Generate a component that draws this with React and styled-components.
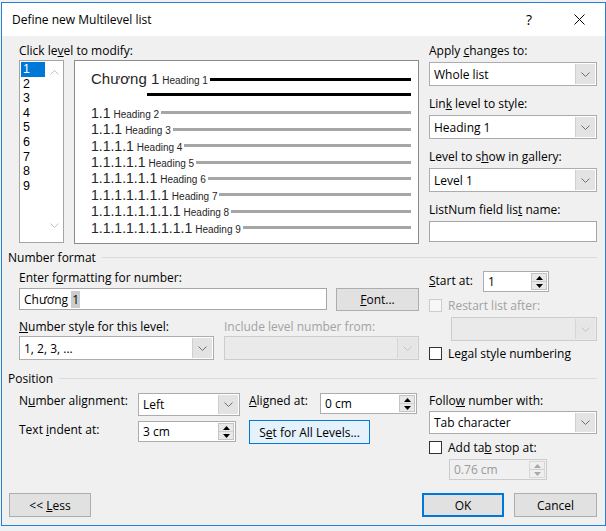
import styled, { createGlobalStyle } from "styled-components";

const GlobalStyle = createGlobalStyle`
  html, body {
    margin: 0;
    padding: 0;
  }
  body {
    background: #eef1f4;
    font-family: "Open Sans", "Noto Sans", sans-serif;
    font-size: 12px;
    color: #000;
  }
`;

const levels = [1, 2, 3, 4, 5, 6, 7, 8, 9];

const Chevron = ({ color = "#606060" }) => (
  <svg width="9" height="5" viewBox="0 0 9 5">
    <polyline points="0.5,0.5 4.5,4.5 8.5,0.5" fill="none" stroke={color} strokeWidth="1" />
  </svg>
);

const SpinArrows = ({ disabled }) => {
  const c = disabled ? "#a8a8a8" : "#000";
  return (
    <SpinBox $disabled={disabled}>
      <SpinHalf>
        <svg width="7" height="4" viewBox="0 0 7 4"><polygon points="0,4 3.5,0 7,4" fill={c} /></svg>
      </SpinHalf>
      <SpinHalf $bottom>
        <svg width="7" height="4" viewBox="0 0 7 4"><polygon points="0,0 3.5,4 7,0" fill={c} /></svg>
      </SpinHalf>
    </SpinBox>
  );
};

const Combo = ({ value, width, height, disabled }) => (
  <Select $w={width} $h={height} $disabled={disabled}>
    <SelectValue>{value}</SelectValue>
    <DropButton $disabled={disabled}>
      <Chevron color={disabled ? "#c4c4c4" : "#707070"} />
    </DropButton>
  </Select>
);

const Spinner = ({ value, width, disabled }) => (
  <SpinField $w={width} $disabled={disabled}>
    <SelectValue>{value}</SelectValue>
    <SpinArrows disabled={disabled} />
  </SpinField>
);

const App = () => {
  return (
    <>
      <GlobalStyle />
      <Dialog>
        <TitleBar>
          <Title>Define new Multilevel list</Title>
          <CaptionButton>?</CaptionButton>
          <CaptionButton>
            <svg width="11" height="11" viewBox="0 0 11 11">
              <path d="M0.5 0.5 L10.5 10.5 M10.5 0.5 L0.5 10.5" stroke="#000" strokeWidth="1" />
            </svg>
          </CaptionButton>
        </TitleBar>

        <Body>
          <Columns>
            <div>
              <Label>Click le<Key>v</Key>el to modify:</Label>
              <LevelRow>
                <LevelList>
                  <LevelItems>
                    {levels.map((n) => (
                      <LevelItem key={n} $selected={n === 1}>{n}</LevelItem>
                    ))}
                  </LevelItems>
                  <ScrollTrack>
                    <svg width="9" height="5" viewBox="0 0 9 5">
                      <polyline points="0.5,4.5 4.5,0.5 8.5,4.5" fill="none" stroke="#c2c2c2" strokeWidth="1" />
                    </svg>
                    <Chevron color="#c2c2c2" />
                  </ScrollTrack>
                </LevelList>

                <Preview>
                  <PreviewRow $h={20}>
                    <Num $size={15}>Chương 1</Num>
                    <Heading>Heading 1</Heading>
                    <Rule $dark />
                  </PreviewRow>
                  <ContinueRow>
                    <Rule $dark />
                  </ContinueRow>
                  {levels.slice(1).map((n) => (
                    <PreviewRow key={n}>
                      <Num>{Array(n).fill(1).join(".")}</Num>
                      <Heading>Heading {n}</Heading>
                      <Rule />
                    </PreviewRow>
                  ))}
                </Preview>
              </LevelRow>
            </div>

            <SideStack>
              <Field>
                <Label>Apply <Key>c</Key>hanges to:</Label>
                <Combo value="Whole list" />
              </Field>
              <Field>
                <Label>Lin<Key>k</Key> level to style:</Label>
                <Combo value="Heading 1" />
              </Field>
              <Field>
                <Label>Level to s<Key>h</Key>ow in gallery:</Label>
                <Combo value="Level 1" />
              </Field>
              <Field>
                <Label>ListNum field lis<Key>t</Key> name:</Label>
                <TextBox $h={21} />
              </Field>
            </SideStack>
          </Columns>

          <GroupHeading $top={6}>Number format</GroupHeading>

          <Columns $top={5}>
            <div>
              <Label>Enter f<Key>o</Key>rmatting for number:</Label>
              <InputRow>
                <TextBox $w={308}>
                  Chương <Selected>1</Selected>
                </TextBox>
                <Button $w={83} $h={23}><Key>F</Key>ont...</Button>
              </InputRow>
              <PairGrid>
                <Label><Key>N</Key>umber style for this level:</Label>
                <Label $disabled>Include level number from:</Label>
                <Combo value="1, 2, 3, ..." />
                <Combo disabled />
              </PairGrid>
            </div>

            <div>
              <StartRow>
                <InlineLabel><Key>S</Key>tart at:</InlineLabel>
                <Spinner value="1" width={66} />
              </StartRow>
              <CheckRow $top={6}>
                <CheckBox $disabled />
                <Label $disabled>Restart list after:</Label>
              </CheckRow>
              <Indented $top={4} $indent={22}>
                <Combo disabled />
              </Indented>
              <CheckRow $top={5}>
                <CheckBox />
                <Label>Le<Key>g</Key>al style numbering</Label>
              </CheckRow>
            </div>
          </Columns>

          <GroupHeading $top={10}>Position</GroupHeading>

          <Columns $top={7}>
            <PositionGrid>
              <Label>N<Key>u</Key>mber alignment:</Label>
              <Combo value="Left" width={102} height={23} />
              <Label><Key>A</Key>ligned at:</Label>
              <Spinner value="0 cm" width={97} />

              <Label $top={2}>Text <Key>i</Key>ndent at:</Label>
              <Spinner value="3 cm" width={98} />
              <SpanCell>
                <Button $w={121} $hover>S<Key>e</Key>t for All Levels...</Button>
              </SpanCell>
            </PositionGrid>

            <div>
              <Label>Follo<Key>w</Key> number with:</Label>
              <Field $gap={3}>
                <Combo value="Tab character" height={23} />
              </Field>
              <CheckRow $top={6}>
                <CheckBox />
                <Label>Add ta<Key>b</Key> stop at:</Label>
              </CheckRow>
              <Indented $top={4} $indent={20}>
                <Spinner value="0.76 cm" width={98} disabled />
              </Indented>
            </div>
          </Columns>

          <Footer>
            <Button $w={82}>&lt;&lt; <Key>L</Key>ess</Button>
            <ButtonGroup>
              <Button $w={82} $default>OK</Button>
              <Button $w={83}>Cancel</Button>
            </ButtonGroup>
          </Footer>
        </Body>
      </Dialog>
    </>
  );
};

const Dialog = styled.div`
  box-sizing: border-box;
  margin: 2px 0 0 1px;
  width: 605px;
  height: 524px;
  border: 1px solid #2a7fd4;
  background: #f0f0f0;
  display: flex;
  flex-direction: column;
`;

const TitleBar = styled.div`
  height: 33px;
  flex: none;
  background: #fff;
  display: flex;
  align-items: center;
  padding: 0 1px 0 10px;
`;

const Title = styled.div`
  flex: 1;
  font-size: 12px;
  color: #000;
`;

const CaptionButton = styled.div`
  width: 50px;
  height: 33px;
  display: flex;
  align-items: center;
  justify-content: center;
  font-size: 14px;
  color: #000;
`;

const Body = styled.div`
  flex: 1;
  display: flex;
  flex-direction: column;
  padding: 7px 8px 8px 6px;
`;

const Columns = styled.div`
  display: grid;
  grid-template-columns: 400px 1fr;
  column-gap: 10px;
  padding-left: 11px;
  margin-top: ${(p) => p.$top || 0}px;
`;

const Key = styled.u`
  text-underline-offset: 1px;
`;

const Label = styled.div`
  line-height: 15px;
  height: 15px;
  white-space: nowrap;
  color: ${(p) => (p.$disabled ? "#a2a2a2" : "#000")};
  margin-top: ${(p) => p.$top || 0}px;
`;

const InlineLabel = styled.div`
  width: 54px;
  line-height: 15px;
  margin-top: -2px;
`;

const LevelRow = styled.div`
  display: flex;
  gap: 10px;
  margin-top: 2px;
`;

const LevelList = styled.div`
  box-sizing: border-box;
  width: 45px;
  height: 183px;
  border: 1px solid #a5a5a5;
  background: #fff;
  display: flex;
`;

const LevelItems = styled.div`
  width: 24px;
  padding: 1px 0 0 1px;
  font-family: "Liberation Sans", Arial, sans-serif;
  font-size: 12.5px;
`;

const LevelItem = styled.div`
  height: 14.6px;
  line-height: 14.6px;
  padding-left: 2px;
  background: ${(p) => (p.$selected ? "#0078d7" : "transparent")};
  color: ${(p) => (p.$selected ? "#fff" : "#000")};
`;

const ScrollTrack = styled.div`
  flex: 1;
  display: flex;
  flex-direction: column;
  align-items: center;
  justify-content: space-between;
  padding: 9px 0 14px;
`;

const Preview = styled.div`
  box-sizing: border-box;
  flex: 1;
  height: 184px;
  border: 1px solid #8a8a8a;
  background: #fff;
  padding: 8px 7px 0 16px;
  font-family: "Liberation Sans", Arial, sans-serif;
  color: #262626;
`;

const PreviewRow = styled.div`
  display: flex;
  align-items: baseline;
  height: ${(p) => p.$h || 16.4}px;
`;

const ContinueRow = styled.div`
  box-sizing: border-box;
  display: flex;
  align-items: center;
  height: 15.8px;
  padding: 0 0 4px 54px;
`;

const Num = styled.span`
  font-size: ${(p) => p.$size || 14}px;
  line-height: ${(p) => (p.$size ? 20 : 16)}px;
  white-space: nowrap;
`;

const Heading = styled.span`
  font-size: 10px;
  margin-left: 3px;
  white-space: nowrap;
`;

const Rule = styled.div`
  flex: 1;
  align-self: center;
  height: 3px;
  margin-left: 2px;
  background: ${(p) => (p.$dark ? "#000" : "#a6a6a6")};
`;

const SideStack = styled.div`
  display: flex;
  flex-direction: column;
  gap: 10px;
`;

const Field = styled.div`
  display: flex;
  flex-direction: column;
  gap: ${(p) => p.$gap ?? 4}px;
  margin-top: ${(p) => (p.$gap ? p.$gap : 0)}px;
`;

const Select = styled.div`
  box-sizing: border-box;
  display: flex;
  width: ${(p) => (p.$w ? `${p.$w}px` : "100%")};
  height: ${(p) => p.$h || 24}px;
  border: 1px solid ${(p) => (p.$disabled ? "#cccccc" : "#acacac")};
  background: ${(p) => (p.$disabled ? "#eaeaea" : "#fff")};
`;

const SelectValue = styled.div`
  flex: 1;
  display: flex;
  align-items: center;
  padding-left: 4px;
  white-space: nowrap;
  overflow: hidden;
`;

const DropButton = styled.div`
  width: 19px;
  margin: 1px;
  display: flex;
  align-items: center;
  justify-content: center;
  background: ${(p) => (p.$disabled ? "#e6e6e6" : "#e3e3e3")};
  border-left: 1px solid ${(p) => (p.$disabled ? "#d6d6d6" : "#cfcfcf")};
`;

const TextBox = styled.div`
  box-sizing: border-box;
  display: flex;
  align-items: center;
  white-space: pre;
  width: ${(p) => (p.$w ? `${p.$w}px` : "100%")};
  height: ${(p) => p.$h || 22}px;
  padding-left: 4px;
  border: 1px solid #a6a6a6;
  background: #fff;
`;

const Selected = styled.span`
  background: #cccccc;
  padding: 0 1px;
`;

const SpinField = styled.div`
  box-sizing: border-box;
  display: flex;
  width: ${(p) => p.$w}px;
  height: 21px;
  border: 1px solid ${(p) => (p.$disabled ? "#cccccc" : "#acacac")};
  background: ${(p) => (p.$disabled ? "#f0f0f0" : "#fff")};
  color: ${(p) => (p.$disabled ? "#9a9a9a" : "#000")};
`;

const SpinBox = styled.div`
  width: 14px;
  margin: 1px;
  display: flex;
  flex-direction: column;
  border: 1px solid ${(p) => (p.$disabled ? "#d8d8d8" : "#c4c4c4")};
  background: ${(p) => (p.$disabled ? "#efefef" : "#e8e8e8")};
`;

const SpinHalf = styled.div`
  flex: 1;
  display: flex;
  align-items: center;
  justify-content: center;
  border-top: ${(p) => (p.$bottom ? "1px solid #cfcfcf" : "none")};
`;

const InputRow = styled.div`
  display: flex;
  justify-content: space-between;
  align-items: flex-start;
  margin-top: 3px;
`;

const PairGrid = styled.div`
  display: grid;
  grid-template-columns: 195px 195px;
  column-gap: 10px;
  row-gap: 2px;
  margin-top: 8px;
`;

const StartRow = styled.div`
  display: flex;
  align-items: center;
  margin-top: 1px;
`;

const CheckRow = styled.div`
  display: flex;
  align-items: center;
  gap: 6px;
  margin-top: ${(p) => p.$top || 0}px;
`;

const CheckBox = styled.div`
  box-sizing: border-box;
  width: 13px;
  height: 13px;
  border: 1px solid ${(p) => (p.$disabled ? "#cccccc" : "#333333")};
  background: ${(p) => (p.$disabled ? "#f7f7f7" : "#fff")};
`;

const Indented = styled.div`
  margin: ${(p) => p.$top || 0}px 0 0 ${(p) => p.$indent || 0}px;
`;

const GroupHeading = styled.div`
  display: flex;
  align-items: center;
  gap: 6px;
  height: 15px;
  line-height: 15px;
  margin-top: ${(p) => p.$top || 0}px;

  &::after {
    content: "";
    flex: 1;
    border-top: 1px solid #dcdcdc;
  }
`;

const PositionGrid = styled.div`
  display: grid;
  grid-template-columns: 119px 111px 71px 99px;
  grid-template-rows: 24px 24px;
  row-gap: 3px;
  align-items: start;

  & > :nth-child(6) {
    margin-top: 1px;
  }
`;

const SpanCell = styled.div`
  grid-column: 3 / span 2;
`;

const Button = styled.button`
  box-sizing: border-box;
  width: ${(p) => p.$w}px;
  height: ${(p) => p.$h || 24}px;
  padding: 0;
  font: inherit;
  color: #000;
  background: ${(p) => (p.$hover ? "#e5f1fb" : "#e1e1e1")};
  border: ${(p) =>
    p.$default ? "2px solid #0078d7" : p.$hover ? "1px solid #0078d7" : "1px solid #adadad"};
`;

const Footer = styled.div`
  margin-top: auto;
  display: flex;
  justify-content: space-between;
  padding-left: 1px;
`;

const ButtonGroup = styled.div`
  display: flex;
  gap: 10px;
`;

export default App;
